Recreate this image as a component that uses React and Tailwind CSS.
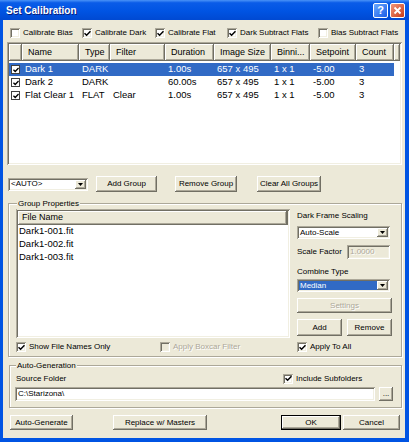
import React from 'react';

const raised = 'bg-[#ece9d8] shadow-[inset_-1px_-1px_0_#716f64,inset_1px_1px_0_#fff,inset_-2px_-2px_0_#aca899]';
const sunken = 'shadow-[inset_1px_1px_0_#aca899,inset_-1px_-1px_0_#fff,inset_2px_2px_0_#716f64,inset_-2px_-2px_0_#f1efe2]';
const etched = 'border border-[#aca899] shadow-[1px_1px_0_#fff,inset_1px_1px_0_#fff]';
const dim = 'text-[#aca899] [text-shadow:1px_1px_0_#fff]';

const columns = [
  { key: 'name', label: 'Name', w: 'w-[57px]' },
  { key: 'type', label: 'Type', w: 'w-[31px]' },
  { key: 'filter', label: 'Filter', w: 'w-[55px]' },
  { key: 'duration', label: 'Duration', w: 'w-[49px]' },
  { key: 'size', label: 'Image Size', w: 'w-[57px]' },
  { key: 'bin', label: 'Binni...', w: 'w-[39px]' },
  { key: 'setpoint', label: 'Setpoint', w: 'w-[46px]' },
  { key: 'count', label: 'Count', w: 'w-[38px]' },
];

const groups = [
  { name: 'Dark 1', type: 'DARK', filter: '', duration: '1.00s', size: '657 x 495', bin: '1 x 1', setpoint: '-5.00', count: '3', selected: true },
  { name: 'Dark 2', type: 'DARK', filter: '', duration: '60.00s', size: '657 x 495', bin: '1 x 1', setpoint: '-5.00', count: '3' },
  { name: 'Flat Clear 1', type: 'FLAT', filter: 'Clear', duration: '1.00s', size: '657 x 495', bin: '1 x 1', setpoint: '-5.00', count: '3' },
];

const files = ['Dark1-001.fit', 'Dark1-002.fit', 'Dark1-003.fit'];

const Tick = () => (
  <svg width="7" height="7" viewBox="0 0 7 7">
    <path d="M0.5 3.2 L2.6 5.3 L6.5 1.2" stroke="#000" strokeWidth="1.5" fill="none" />
  </svg>
);

const Check = ({ checked, disabled, label, className = '' }) => (
  <div className={`flex items-center ${className}`}>
    <span className={`w-[10px] h-[10px] shrink-0 flex items-center justify-center ${disabled ? 'bg-[#ece9d8]' : 'bg-white'} ${sunken}`}>
      {checked && <Tick />}
    </span>
    <span className={`ml-[3px] whitespace-nowrap ${disabled ? dim : ''}`}>{label}</span>
  </div>
);

const Btn = ({ children, className = '', isDefault, disabled }) => (
  <div
    className={`flex items-center justify-center whitespace-nowrap ${raised} ${isDefault ? 'border border-black' : ''} ${disabled ? dim : ''} ${className}`}
  >
    {children}
  </div>
);

const Arrow = () => (
  <div className={`w-[11px] h-full flex items-center justify-center ${raised}`}>
    <svg width="5" height="3" viewBox="0 0 5 3">
      <path d="M0 0H5L2.5 3Z" fill="#000" />
    </svg>
  </div>
);

const Combo = ({ value, selected, className = '' }) => (
  <div className={`flex items-center h-[13px] bg-white p-[2px] ${sunken} ${className}`}>
    <div className={`flex-1 h-full flex items-center pl-[1px] ${selected ? 'bg-[#316ac5] text-white' : ''}`}>{value}</div>
    <Arrow />
  </div>
);

const GroupsList = () => (
  <div className={`ml-[4px] mt-[3px] w-[395px] h-[123px] bg-white p-[2px] ${sunken}`}>
    <div className="flex h-[17px] text-[9px]">
      <div className={`w-[13px] ${raised}`} />
      {columns.map((c) => (
        <div key={c.key} className={`${c.w} flex items-center pl-[6px] whitespace-nowrap ${raised}`}>
          {c.label}
        </div>
      ))}
      <div className={`flex-1 ${raised}`} />
    </div>
    <div className="mt-[2px] text-[9.5px]">
      {groups.map((g) => (
        <div key={g.name} className={`flex h-[13px] w-[385px] items-center ${g.selected ? 'bg-[#316ac5] text-white' : ''}`}>
          <div className="w-[13px] flex items-center pl-[2px]">
            <span className="w-[9px] h-[9px] bg-white border border-[#404040] flex items-center justify-center">
              <svg width="6" height="6" viewBox="0 0 7 7">
                <path d="M0.5 3.2 L2.6 5.3 L6.5 1.2" stroke="#000" strokeWidth="1.6" fill="none" />
              </svg>
            </span>
          </div>
          {columns.map((c) => (
            <div key={c.key} className={`${c.w} pl-[3px] whitespace-nowrap`}>
              {g[c.key]}
            </div>
          ))}
        </div>
      ))}
    </div>
  </div>
);

const GroupProperties = () => (
  <div className={`relative mt-[11px] ml-[5px] w-[394px] h-[154px] ${etched}`}>
    <span className="absolute -top-[7px] left-[8px] px-[1px] bg-[#ece9d8] leading-[13px]">Group Properties</span>
    <div className="flex pt-[5px] pl-[7px]">
      <div className={`w-[274px] h-[129px] bg-white p-[2px] ${sunken}`}>
        <div className="flex h-[14px] text-[9px]">
          <div className={`w-[269px] flex items-center pl-[4px] ${raised}`}>File Name</div>
          <div className={`flex-1 ${raised}`} />
        </div>
        <div className="text-[9.5px]">
          {files.map((f) => (
            <div key={f} className="h-[13px] flex items-center pl-[1px]">{f}</div>
          ))}
        </div>
      </div>
      <div className="ml-[7px] w-[95px] flex flex-col">
        <div className="h-[13px] flex items-center">Dark Frame Scaling</div>
        <Combo value="Auto-Scale" className="mt-[4px] w-[93px]" />
        <div className="mt-[6px] h-[14px] flex items-center w-[93px]">
          <span>Scale Factor</span>
          <div className={`ml-auto w-[43px] h-full flex items-center pl-[3px] bg-[#ece9d8] ${sunken} ${dim}`}>1.0000</div>
        </div>
        <div className="mt-[6px] h-[13px] flex items-center">Combine Type</div>
        <Combo value="Median" selected className="mt-[1px] w-[93px]" />
        <Btn disabled className="mt-[6px] h-[15px] w-[95px]">Settings</Btn>
        <div className="mt-[6px] flex h-[17px]">
          <Btn className="w-[45px] h-full">Add</Btn>
          <Btn className="ml-[5px] w-[45px] h-full">Remove</Btn>
        </div>
      </div>
    </div>
    <div className="flex items-center h-[12px] mt-[3px] pl-[7px]">
      <Check checked label="Show File Names Only" className="w-[144px]" />
      <Check disabled label="Apply Boxcar Filter" className="w-[137px]" />
      <Check checked label="Apply To All" />
    </div>
  </div>
);

const AutoGeneration = () => (
  <div className={`relative mt-[8px] ml-[6px] w-[393px] h-[43px] ${etched}`}>
    <span className="absolute -top-[7px] left-[6px] px-[1px] bg-[#ece9d8] leading-[13px]">Auto-Generation</span>
    <div className="flex items-center h-[13px] mt-[6px] pl-[6px]">
      <span className="w-[267px]">Source Folder</span>
      <Check checked label="Include Subfolders" />
    </div>
    <div className="flex h-[14px] mt-[2px] pl-[5px]">
      <div className={`w-[360px] h-full bg-white flex items-center pl-[3px] ${sunken}`}>{'C:\\Starizona\\'}</div>
      <Btn className="ml-[4px] w-[14px] h-full">...</Btn>
    </div>
  </div>
);

const TitleBar = () => (
  <div className="h-[20px] flex items-center pl-[6px] pr-[4px] bg-[linear-gradient(180deg,#4a93f7_0%,#0a5ce8_14%,#0054e3_55%,#0049d2_100%)]">
    <span className="text-white font-bold text-[10px] [text-shadow:1px_1px_0_#0a1e7a]">Set Calibration</span>
    <div className="ml-auto w-[15px] h-[15px] rounded-[2px] border border-white bg-linear-to-br from-[#6aa8ff] to-[#1c5ce6] flex items-center justify-center text-white font-bold text-[11px] leading-none">
      ?
    </div>
    <div className="ml-[2px] w-[15px] h-[15px] rounded-[2px] border border-white bg-linear-to-br from-[#f0957a] to-[#c6380f] flex items-center justify-center">
      <svg width="9" height="9" viewBox="0 0 9 9">
        <path d="M1.5 1.5L7.5 7.5M7.5 1.5L1.5 7.5" stroke="#fff" strokeWidth="1.8" />
      </svg>
    </div>
  </div>
);

const App = () => {
  return (
    <div className="w-[409px] h-[442px] flex flex-col bg-[#0054e3] font-['Liberation_Sans',Arial,sans-serif] text-[8px] text-black">
      <TitleBar />
      <div className="flex-1 flex pl-[3px] pr-[4px] pb-[4px]">
        <div className="flex-1 bg-[#ece9d8] flex flex-col">
          <div className="flex items-center h-[12px] mt-[7px] pl-[7px]">
            <Check label="Calibrate Bias" className="w-[72px]" />
            <Check checked label="Calibrate Dark" className="w-[73px]" />
            <Check checked label="Calibrate Flat" className="w-[72px]" />
            <Check checked label="Dark Subtract Flats" className="w-[91px]" />
            <Check label="Bias Subtract Flats" />
          </div>

          <GroupsList />

          <div className="flex items-center h-[16px] mt-[11px] pl-[5px]">
            <Combo value="<AUTO>" className="w-[80px]" />
            <Btn className="ml-[8px] w-[61px] h-full">Add Group</Btn>
            <Btn className="ml-[18px] w-[62px] h-full">Remove Group</Btn>
            <Btn className="ml-[20px] w-[64px] h-full">Clear All Groups</Btn>
          </div>

          <GroupProperties />
          <AutoGeneration />

          <div className="flex h-[15px] mt-[7px] pl-[7px]">
            <Btn className="w-[63px] h-full">Auto-Generate</Btn>
            <Btn className="ml-[40px] w-[94px] h-full">Replace w/ Masters</Btn>
            <Btn isDefault className="ml-[74px] w-[60px] h-full">OK</Btn>
            <Btn className="ml-[2px] w-[57px] h-full">Cancel</Btn>
          </div>
        </div>
      </div>
    </div>
  );
};

export default App;
